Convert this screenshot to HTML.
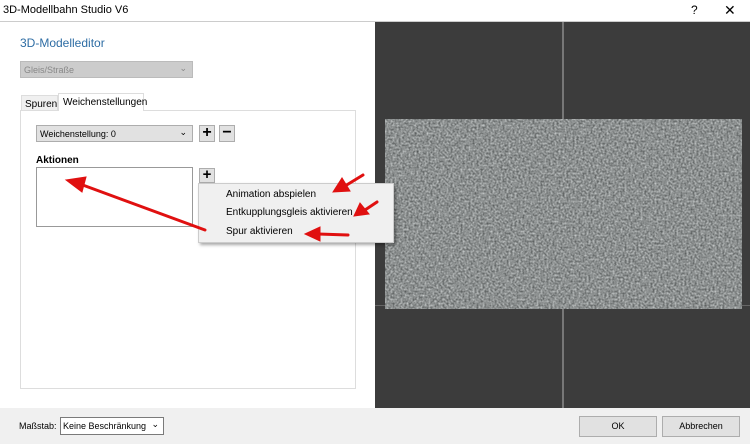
<!DOCTYPE html>
<html><head><style>
*{margin:0;padding:0;box-sizing:border-box}
body{width:750px;height:444px;position:relative;overflow:hidden;background:#fff;font-family:"Liberation Sans",sans-serif;font-size:10px;color:#000}
.a{position:absolute;white-space:nowrap}
.btn{position:absolute;border:1px solid #adadad;background:#e1e1e1;text-align:center}
</style></head><body>
<div class="a" style="left:3px;top:4px;font-size:11px">3D-Modellbahn Studio V6</div>
<div class="a" style="left:691px;top:3px;font-size:12px">?</div>
<div class="a" style="left:724px;top:2px;font-size:14px">✕</div>
<div class="a" style="left:0;top:21px;width:750px;height:1px;background:#ccc"></div>

<div class="a" style="left:20px;top:36px;font-size:12px;color:#2e6da4">3D-Modelleditor</div>
<div class="a" style="left:20px;top:61px;width:173px;height:17px;background:#ccc;border:1px solid #bbb;color:#888;padding:3px 3px;font-size:9px">Gleis/Straße<span style="position:absolute;right:5px;top:1px">⌄</span></div>

<div class="a" style="left:20px;top:110px;width:336px;height:279px;border:1px solid #ddd"></div>
<div class="a" style="left:21px;top:95px;width:37px;height:15px;border:1px solid #ddd;border-bottom:none;background:#f0f0f0;padding:3px 3px">Spuren</div>
<div class="a" style="left:58px;top:93px;width:86px;height:18px;border:1px solid #ddd;border-bottom:none;background:#fff;padding:3px 4px">Weichenstellungen</div>

<div class="a" style="left:36px;top:125px;width:157px;height:17px;background:#e1e1e1;border:1px solid #adadad;padding:3px 3px;font-size:9px">Weichenstellung: 0<span style="position:absolute;right:5px;top:1px">⌄</span></div>
<div class="btn" style="left:199px;top:125px;width:16px;height:17px;font-size:16px;line-height:14px;font-weight:bold">+</div>
<div class="btn" style="left:219px;top:125px;width:16px;height:17px;font-size:16px;line-height:13px;font-weight:bold">−</div>
<div class="a" style="left:36px;top:155px;font-weight:bold">Aktionen</div>
<div class="a" style="left:36px;top:167px;width:157px;height:60px;border:1px solid #999;background:#fff"></div>
<div class="btn" style="left:199px;top:168px;width:16px;height:15px;font-size:15px;line-height:12px;font-weight:bold">+</div>

<div class="a" style="left:375px;top:22px;width:375px;height:386px;background:#3c3c3c"></div>
<div class="a" style="left:562px;top:22px;width:2px;height:386px;background:#777"></div>
<div class="a" style="left:375px;top:305px;width:375px;height:1px;background:#666"></div>
<svg class="a" style="left:385px;top:119px" width="357" height="190"><filter id="n" x="0" y="0" width="100%" height="100%" color-interpolation-filters="sRGB"><feTurbulence type="fractalNoise" baseFrequency="0.5" numOctaves="3" seed="3"/><feColorMatrix type="matrix" values="0.6 0 0 0 0.25  0.6 0 0 0 0.265  0.6 0 0 0 0.265  0 0 0 0 1"/></filter><rect width="357" height="190" filter="url(#n)"/></svg>

<div class="a" style="left:198px;top:183px;width:196px;height:60px;background:#f0f0f0;border:1px solid #ccc;box-shadow:2px 2px 3px rgba(0,0,0,.35)"></div>
<div class="a" style="left:226px;top:189px">Animation abspielen</div>
<div class="a" style="left:226px;top:207px">Entkupplungsgleis aktivieren</div>
<div class="a" style="left:226px;top:226px">Spur aktivieren</div>

<svg class="a" style="left:0;top:0" width="750" height="444">
<g stroke="#e01010" stroke-width="3" fill="#e01010" stroke-linecap="round">
<line x1="205" y1="230" x2="80" y2="184"/><polygon points="66,180 86,177 82,192" stroke-width="1"/>
<line x1="363" y1="175" x2="345" y2="186"/><polygon points="333,192 342,178 350,191" stroke-width="1"/>
<line x1="377" y1="202" x2="365" y2="210"/><polygon points="354,216 360,203 369,214" stroke-width="1"/>
<line x1="348" y1="235" x2="318" y2="234"/><polygon points="305,234 320,227 320,241" stroke-width="1"/>
</g></svg>

<div class="a" style="left:0;top:408px;width:750px;height:36px;background:#f0f0f0"></div>
<div class="a" style="left:19px;top:421px;font-size:9px">Maßstab:</div>
<div class="a" style="left:60px;top:417px;width:104px;height:18px;background:#fff;border:1px solid #7a7a7a;padding:3px 2px;font-size:9px">Keine Beschränkung<span style="position:absolute;right:4px;top:1px">⌄</span></div>
<div class="btn" style="left:579px;top:416px;width:78px;height:21px;line-height:19px;font-size:9px">OK</div>
<div class="btn" style="left:662px;top:416px;width:78px;height:21px;line-height:19px;font-size:9px">Abbrechen</div>
</body></html>
